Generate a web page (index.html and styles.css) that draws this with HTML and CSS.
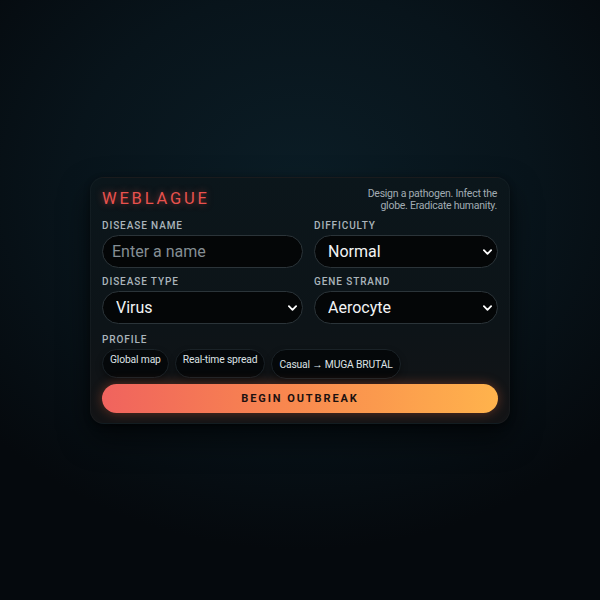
FILE: index.html
```html
<!DOCTYPE html>
<html lang="en">
<head>
<meta charset="utf-8">
<title>Weblague</title>
<link rel="stylesheet" href="styles.css">
</head>
<body>
<main class="stage">
  <section class="card">
    <header class="card-head">
      <h1 class="logo">WEBLAGUE</h1>
      <p class="tagline">Design a pathogen. Infect the<br>globe. Eradicate humanity.</p>
    </header>

    <div class="fields">
      <label class="field">
        <span class="field-label">Disease name</span>
        <input class="control" type="text" placeholder="Enter a name">
      </label>
      <label class="field">
        <span class="field-label">Difficulty</span>
        <span class="select-wrap">
          <select class="control select"><option>Normal</option><option>Casual</option><option>Brutal</option></select>
          <svg class="chev" viewBox="0 0 10 6" width="9" height="6"><path d="M1 1l4 4 4-4" fill="none" stroke="#fff" stroke-width="2" stroke-linecap="round" stroke-linejoin="round"/></svg>
        </span>
      </label>
      <label class="field">
        <span class="field-label">Disease type</span>
        <span class="select-wrap">
          <select class="control select"><option>Virus</option><option>Bacteria</option><option>Fungus</option></select>
          <svg class="chev" viewBox="0 0 10 6" width="9" height="6"><path d="M1 1l4 4 4-4" fill="none" stroke="#fff" stroke-width="2" stroke-linecap="round" stroke-linejoin="round"/></svg>
        </span>
      </label>
      <label class="field">
        <span class="field-label">Gene strand</span>
        <span class="select-wrap">
          <select class="control select"><option>Aerocyte</option><option>Cytocide</option></select>
          <svg class="chev" viewBox="0 0 10 6" width="9" height="6"><path d="M1 1l4 4 4-4" fill="none" stroke="#fff" stroke-width="2" stroke-linecap="round" stroke-linejoin="round"/></svg>
        </span>
      </label>
    </div>

    <div class="profile">
      <span class="field-label">Profile</span>
      <div class="chips">
        <span class="chip">Global map</span>
        <span class="chip">Real-time spread</span>
        <span class="chip chip-mid">Casual → MUGA BRUTAL</span>
      </div>
    </div>

    <button class="cta" type="button">BEGIN OUTBREAK</button>
  </section>
</main>
</body>
</html>
```

FILE: styles.css
```css
* { box-sizing: border-box; }

html, body {
  margin: 0;
  height: 100%;
}

body {
  font-family: Roboto, "Liberation Sans", sans-serif;
  background:
    radial-gradient(ellipse 420px 360px at 300px 190px, #0b1d26 0%, #08141b 55%, #05090d 100%);
  background-color: #05090d;
  color: #e6eaec;
}

.stage {
  height: 600px;
  display: flex;
  justify-content: center;
  padding-top: 177px;
}

.card {
  width: 420px;
  height: 247px;
  padding: 10px 11px 10px;
  border-radius: 14px;
  background: linear-gradient(180deg, #0b161b 0%, #0d1418 60%, #131416 100%);
  border: 1px solid rgba(255, 255, 255, 0.03);
  box-shadow: 0 14px 30px rgba(0, 0, 0, 0.55), 0 2px 6px rgba(0, 0, 0, 0.4);
  display: flex;
  flex-direction: column;
}

.card-head {
  display: flex;
  justify-content: space-between;
  align-items: flex-start;
  height: 32px;
}

.logo {
  margin: 1px 0 0;
  font-size: 16.5px;
  font-weight: 400;
  letter-spacing: 2.8px;
  color: #e9524e;
  text-shadow: 0 0 7px rgba(240, 80, 70, 0.55);
  line-height: 20px;
}

.tagline {
  margin: 0;
  text-align: right;
  font-size: 10.5px;
  line-height: 12px;
  letter-spacing: -0.25px;
  color: #a2acb3;
  padding-right: 1px;
}

.fields {
  display: grid;
  grid-template-columns: 201px 1fr;
  column-gap: 11px;
  row-gap: 8px;
}

.field {
  display: flex;
  flex-direction: column;
  gap: 3px;
}

.field-label {
  font-size: 10px;
  line-height: 12px;
  font-weight: 500;
  letter-spacing: 0.9px;
  text-transform: uppercase;
  color: #aab4bb;
}

.control {
  width: 100%;
  height: 33px;
  border-radius: 17px;
  border: 1px solid #2b3439;
  background: #040607;
  color: #f2f4f5;
  font-family: Roboto, "Liberation Sans", sans-serif;
  font-size: 16px;
  padding: 0 12px 0 9px;
  outline: none;
}

.control::placeholder { color: #858e94; }

.select-wrap {
  position: relative;
  display: block;
}

.select {
  appearance: none;
  -webkit-appearance: none;
  padding-left: 13px;
}

.chev {
  position: absolute;
  right: 6px;
  top: 14px;
  pointer-events: none;
}

.profile {
  margin-top: 10px;
  display: flex;
  flex-direction: column;
  gap: 3px;
}

.chips {
  display: flex;
  gap: 6px;
  align-items: flex-start;
}

.chip {
  height: 29px;
  padding: 4px 7px 0;
  border-radius: 15px;
  border: 1px solid #1a2227;
  background: #05080a;
  font-size: 10.3px;
  line-height: 12px;
  letter-spacing: -0.15px;
  color: #dde2e5;
  box-shadow: 0 3px 6px rgba(0, 0, 0, 0.35);
}

.chip-mid {
  height: 30px;
  padding-top: 9px;
}

.cta {
  margin-top: 5px;
  height: 29px;
  border: none;
  border-radius: 15px;
  background: linear-gradient(90deg, #f0635e 0%, #f8864f 45%, #ffb34c 100%);
  box-shadow: 0 0 12px rgba(255, 110, 60, 0.35);
  font-family: Roboto, "Liberation Sans", sans-serif;
  font-size: 11px;
  font-weight: 700;
  letter-spacing: 1.9px;
  color: #1c1110;
  cursor: pointer;
}
```
